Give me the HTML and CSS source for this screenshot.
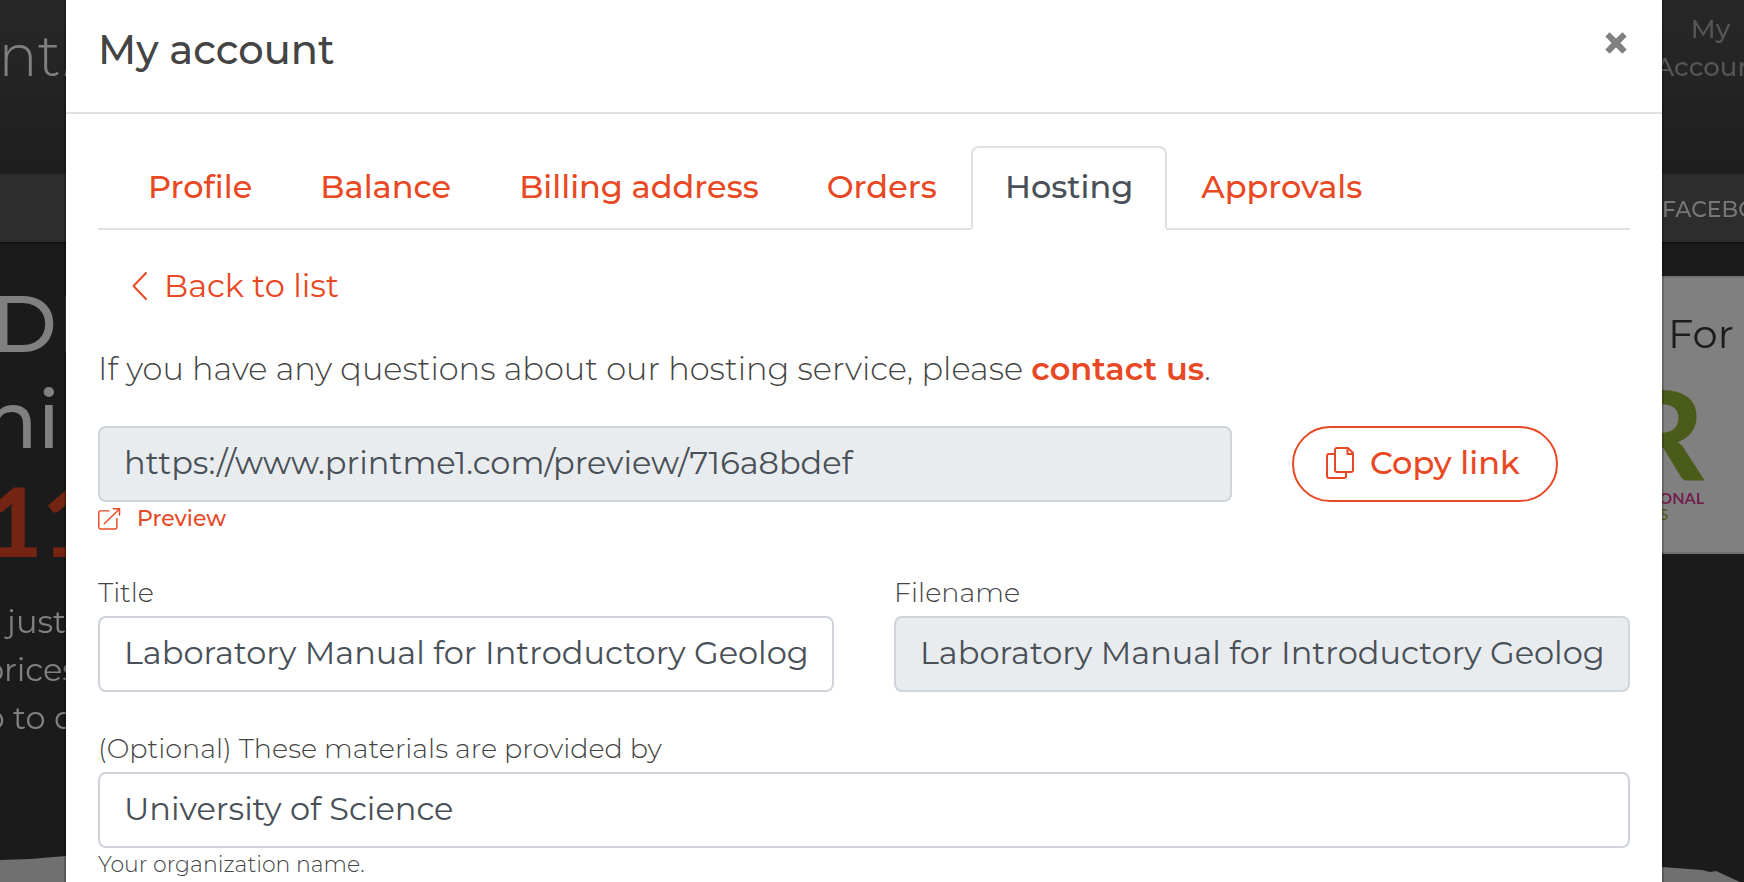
FILE: index.html
```html
<!DOCTYPE html>
<html lang="en">
<head>
<meta charset="utf-8">
<title>My account</title>
<link rel="stylesheet" href="styles.css">
</head>
<body>
<div class="site" aria-hidden="true">
  <header class="site-header">
    <div class="logo edge-left">nt<em>M</em></div>
    <div class="account-link">My<br>Account</div>
  </header>
  <div class="site-nav"><span class="nav-item">FACEBOOK</span></div>
  <div class="hero">
    <div class="hero-copy">
      <div class="headline edge-left headline-first">DI</div>
      <div class="headline edge-left headline-second">ni</div>
      <div class="price edge-left">11</div>
      <div class="pitch edge-left pitch-first">just</div>
      <div class="pitch edge-left pitch-wider">prices</div>
      <div class="pitch edge-left pitch-wide">up to o</div>
    </div>
    <div class="promo">
      <div class="promo-title">For</div>
      <div class="promo-logo">R</div>
      <div class="promo-name">ONAL</div>
      <div class="promo-sub">S</div>
    </div>
  </div>
  <svg class="paper" viewBox="0 0 1744 26" preserveAspectRatio="none"><path d="M0 4 30 3 66 0H800L1662 11l40 3 8 2 6-1 24 11H0z" fill="#707070"/></svg>
</div>

<main class="modal" role="dialog" aria-labelledby="modal-title">
  <header class="modal-header">
    <h1 class="modal-title" id="modal-title">My account</h1>
    <button class="close" type="button" aria-label="Close">
      <svg width="22" height="22" viewBox="0 0 22 22"><path d="M4.500 .3 11 6.600 17.500 .3l4.200 4.200L15.400 11l6.300 6.500-4.200 4.200L11 15.400l-6.500 6.300L.3 17.500 6.600 11 .3 4.500z" fill="#808080"/></svg>
    </button>
  </header>
  <div class="modal-body">
    <nav class="tabs">
      <a class="tab" href="#profile">Profile</a>
      <a class="tab" href="#balance">Balance</a>
      <a class="tab" href="#billing">Billing address</a>
      <a class="tab" href="#orders">Orders</a>
      <a class="tab tab-active" href="#hosting" aria-current="page">Hosting</a>
      <a class="tab" href="#approvals">Approvals</a>
    </nav>
    <a class="back" href="#list">
      <svg width="16" height="30" viewBox="0 0 16 30" fill="none" stroke="currentColor" stroke-width="2" stroke-linecap="round" stroke-linejoin="round"><path d="M14 2 1.500 15 14 28"/></svg>
      Back to list
    </a>
    <p class="intro">If you have any questions about our hosting service, please <a class="contact" href="#contact">contact us</a>.</p>
    <form class="form">
      <div class="field field-url">
        <input class="input" type="text" aria-label="Preview address" value="https://www.printme1.com/preview/716a8bdef" readonly>
        <a class="preview" href="#preview">
          <svg width="23" height="23" viewBox="0 0 24 24" fill="none" stroke="currentColor" stroke-width="1.500" stroke-linecap="round" stroke-linejoin="round"><path d="M11.500 3H2.500A1.700 1.700 0 0 0 .8 4.700v15.500a1.700 1.700 0 0 0 1.700 1.700H18a1.700 1.700 0 0 0 1.700-1.700V11M16 .8h6.500V7.300M22.300 1 6.500 16.500"/></svg>
          Preview
        </a>
      </div>
      <div class="field field-copy">
        <button class="copy" type="button">
          <svg width="28" height="32" viewBox="0 0 28 32" fill="none" stroke="currentColor" stroke-width="2" stroke-linejoin="round"><path d="M9 7H3a2 2 0 0 0-2 2v20a2 2 0 0 0 2 2h15a2 2 0 0 0 2-2v-4"/><path d="M11 1h11l5 5v17a2 2 0 0 1-2 2H11a2 2 0 0 1-2-2V3a2 2 0 0 1 2-2zM21.500 1v6H27"/></svg>
          Copy link
        </button>
      </div>
      <div class="field field-half">
        <label class="label" for="title">Title</label>
        <input class="input" id="title" type="text" value="Laboratory Manual for Introductory Geolog">
      </div>
      <div class="field field-half">
        <label class="label" for="filename">Filename</label>
        <input class="input" id="filename" type="text" value="Laboratory Manual for Introductory Geolog" readonly>
      </div>
      <div class="field field-full">
        <label class="label" for="provider">(Optional) These materials are provided by</label>
        <input class="input" id="provider" type="text" value="University of Science" aria-describedby="provider-help">
        <small class="help" id="provider-help">Your organization name.</small>
      </div>
    </form>
  </div>
</main>
</body>
</html>
```
FILE: styles.css
```css
* { box-sizing: border-box; }

body {
  margin: 0;
  font-family: Montserrat, Inter, "Open Sans", sans-serif;
  font-size: 32px;
  line-height: 48px;
  font-weight: 300;
  font-variant-ligatures: none;
  color: #444;
  background: #1b1b1b;
  overflow: hidden;
}

a { color: #e84924; text-decoration: none; }

/* Dimmed site behind the dialog */
.site {
  position: fixed;
  inset: 0;
  display: flex;
  flex-direction: column;
  overflow: hidden;
  color: #808080;
}
.site-header {
  display: flex;
  justify-content: space-between;
  height: 174px;
  flex: none;
  background: linear-gradient(#282828, #1e1e1e);
}
.edge-left {
  display: flex;
  justify-content: flex-end;
  width: 66px;
  white-space: nowrap;
}
.logo {
  width: 116px;
  padding-top: 24px;
  font-size: 58px;
  line-height: 64px;
  font-weight: 300;
}
.account-link {
  width: 83px;
  padding-top: 10px;
  display: flex;
  justify-content: center;
  text-align: center;
  font-size: 26px;
  line-height: 38px;
  font-weight: 500;
  color: #555;
  margin-right: -8px;
}
.site-nav {
  display: flex;
  justify-content: flex-end;
  height: 70px;
  flex: none;
  background: #2d2d2d;
  border-bottom: 2px solid #101010;
}
.nav-item {
  width: 82px;
  padding-top: 12px;
  font-size: 22px;
  font-weight: 500;
  color: #777;
}
.hero { display: flex; justify-content: space-between; }
.hero-copy { padding-top: 32px; }
.headline { font-size: 80px; line-height: 96px; font-weight: 500; }
.headline-first { width: 82px; }
.headline-second { width: 60px; }
.price {
  width: 98px;
  padding-top: 4px;
  font-family: Lato, sans-serif;
  font-size: 96px;
  line-height: 96px;
  font-weight: 900;
  color: #732412;
}
.pitch { font-weight: 400; }
.pitch-first { padding-top: 30px; }
.pitch-wide { width: 74px; }
.pitch-wider { width: 78px; }
.promo {
  width: 84px;
  height: 278px;
  margin-top: 32px;
  padding: 32px 0 0 6px;
  background: #808080;
  border: 2px solid #707070;
  border-right: 0;
  color: #1b1b1b;
}
.promo-title { font-size: 40px; font-weight: 400; line-height: 48px; }
.promo-logo, .promo-name, .promo-sub {
  display: flex;
  justify-content: flex-end;
  width: 36px;
  font-family: Lato, sans-serif;
}
.promo-logo { padding-top: 18px; font-size: 124px; line-height: 112px; font-weight: 900; color: #4b5c1a; }
.promo-name { padding-top: 2px; font-size: 16px; line-height: 16px; font-weight: 700; color: #732050; }
.promo-sub { justify-content: flex-start; margin-left: -8px; font-size: 15px; line-height: 16px; font-weight: 400; color: #4b5c1a; }
.paper { display: block; position: absolute; bottom: 0; width: 100%; height: 26px; }

/* Dialog */
.modal {
  position: relative;
  min-height: 100vh;
  margin: 0 80px 0 64px;
  background: #fff;
  background-clip: padding-box;
  border: solid rgba(0, 0, 0, .2);
  border-width: 0 2px;
}
.modal-header {
  display: flex;
  justify-content: space-between;
  align-items: flex-start;
  padding: 20px 32px 32px;
  border-bottom: 2px solid #dee2e6;
}
.modal-title { margin: 0; font-size: 40px; line-height: 60px; font-weight: 500; }
.close { padding: 12px 3px; border: 0; background: none; line-height: 0; }
.modal-body { padding: 32px 32px 0; }

.tabs { display: flex; padding-left: 16px; margin-bottom: 32px; position: relative; }
.tabs::before {
  content: "";
  position: absolute;
  inset: auto 0 0;
  border-bottom: 2px solid #dee2e6;
}
.tab {
  padding: 15px 32px 17px;
  border: 2px solid transparent;
  border-radius: 8px 8px 0 0;
  font-weight: 500;
}
.tab-active {
  position: relative;
  color: #495057;
  background: #fff;
  border-color: #dee2e6 #dee2e6 #fff;
}
.back {
  display: inline-flex;
  align-items: center;
  gap: 16px;
  padding-left: 34px;
  font-weight: 400;
}
.intro { margin: 31px 0 33px; }
.contact { font-weight: 600; }

.form { display: grid; grid-template-columns: repeat(12, 1fr); column-gap: 60px; }
.field { display: flex; flex-direction: column; min-width: 0; }
.field-url { grid-column: span 9; }
.field-copy { grid-column: span 3; align-items: flex-start; }
.field-half { grid-column: span 6; }
.field-full { grid-column: span 12; }
.input {
  width: 100%;
  height: 76px;
  padding: 0 24px 3px;
  border: 2px solid #ced4da;
  border-radius: 8px;
  background: #fff;
  color: #495057;
  font: inherit;
  font-weight: 400;
}
.input:read-only { background: #e9ecef; }
.preview {
  display: flex;
  align-items: center;
  gap: 16px;
  font-size: 22px;
  line-height: 34px;
  font-weight: 500;
}
.copy {
  display: flex;
  align-items: center;
  gap: 16px;
  height: 76px;
  padding: 0 36px 3px 32px;
  border: 2px solid #e84924;
  border-radius: 38px;
  background: #fff;
  color: #e84924;
  font: inherit;
  font-weight: 500;
  white-space: nowrap;
}
.label { padding: 37px 0 3px; font-size: 27px; line-height: 40px; }
.help { font-size: 22px; line-height: 34px; }
```
